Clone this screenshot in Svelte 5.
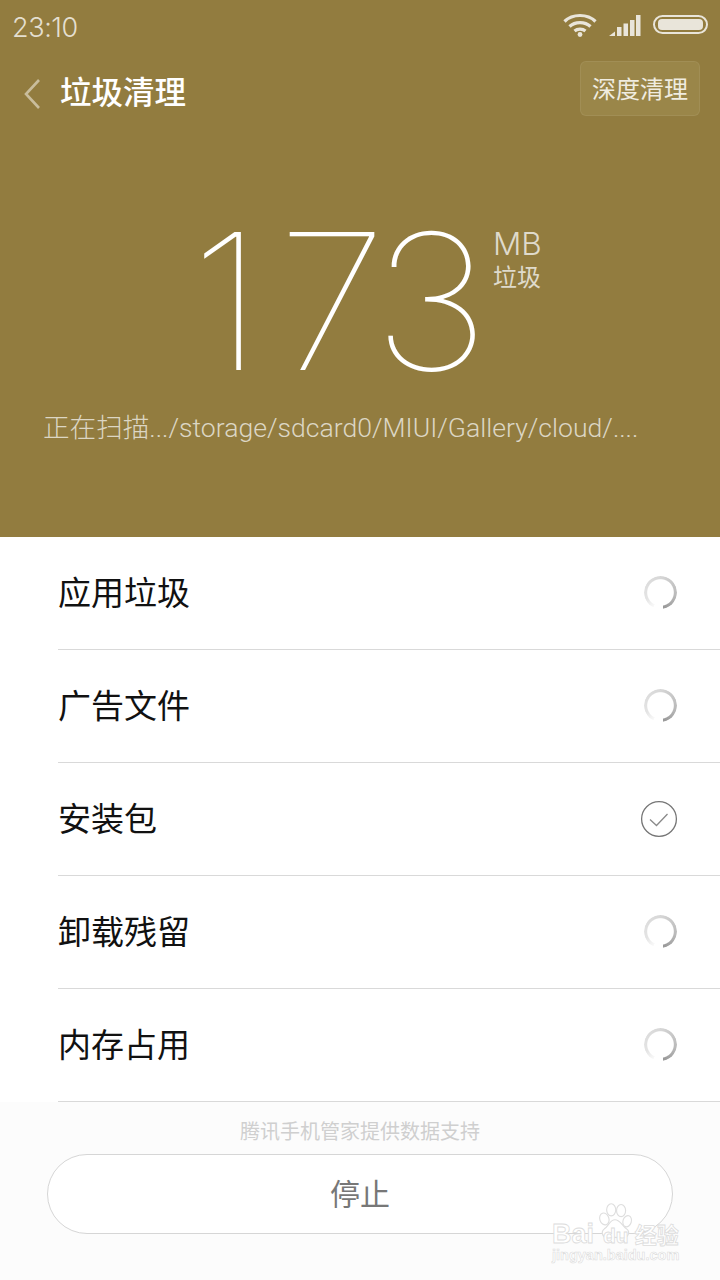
<script>
  const rows = [
    { name: '应用垃圾', done: false },
    { name: '广告文件', done: false },
    { name: '安装包', done: true },
    { name: '卸载残留', done: false },
    { name: '内存占用', done: false }
  ];
</script>

<div class="page">
  <section class="hero">
    <div class="status">
      <span class="time">23:10</span>
      <div class="status-icons">
        <svg class="wifi" width="34" height="26" viewBox="0 0 34 26" fill="none" stroke="#e9e5da" stroke-width="3.2">
          <path d="M1.500 9.500C9.500 1.500 24.500 1.500 32.500 9.500" />
          <path d="M6.500 14.500C12 9.200 22 9.200 27.500 14.500" />
          <path d="M11.500 19C14.500 16.500 19.500 16.500 22.500 19" />
          <circle cx="17" cy="22.500" r="2.400" fill="#e9e5da" stroke="none" />
        </svg>
        <svg class="signal" width="32" height="22" viewBox="0 0 32 22" fill="#e9e5da">
          <path d="M0 21 6 16.500V21Z" />
          <rect x="8" y="12" width="4.500" height="9" />
          <rect x="14.500" y="8.500" width="4.500" height="12.500" />
          <rect x="21" y="5" width="4.500" height="16" />
          <rect x="27" y="0" width="4.500" height="21" />
        </svg>
        <div class="battery"><div class="battery-fill"></div></div>
      </div>
    </div>

    <header class="nav">
      <svg class="back" width="18" height="32" viewBox="0 0 18 32" fill="none" stroke="#c9bd9c" stroke-width="2.600">
        <path d="M16 2 3 16 16 30" />
      </svg>
      <h1>垃圾清理</h1>
      <button class="deep">深度清理</button>
    </header>

    <div class="amount">
      <span class="number"><span class="d1">1</span><span class="d7">7</span>3</span>
      <div class="unit">
        <span class="mb">MB</span>
        <span class="label">垃圾</span>
      </div>
    </div>

    <p class="path">正在扫描.../storage/sdcard0/MIUI/Gallery/cloud/....</p>
  </section>

  <ul class="list">
    {#each rows as row}
      <li>
        <span class="row-name">{row.name}</span>
        {#if row.done}
          <svg class="check" width="38" height="38" viewBox="0 0 38 38" fill="none" stroke="#767676" stroke-width="1.300">
            <circle cx="19" cy="19" r="17.400" />
            <path d="M10 19.500 16.500 25.500 27.500 14" stroke="#8a8a8a" />
          </svg>
        {:else}
          <span class="spinner"></span>
        {/if}
      </li>
    {/each}
  </ul>

  <footer class="foot">
    <p class="credit">腾讯手机管家提供数据支持</p>
    <button class="stop">停止</button>
  </footer>

  <div class="mark">
    <svg class="paw" width="36" height="38" viewBox="0 0 46 50" fill="#fff" stroke="#dedede" stroke-width="1.500">
      <ellipse cx="9" cy="21" rx="6" ry="8" transform="rotate(-18 9 21)" />
      <ellipse cx="18" cy="9" rx="6" ry="8" />
      <ellipse cx="31" cy="10" rx="6" ry="8" />
      <ellipse cx="39" cy="24" rx="5.500" ry="7.500" transform="rotate(18 39 24)" />
      <path d="M23 22C16 22 15 30 9 34 3 39 8 47 15 46 20 45 27 45 32 46 40 47 44 38 38 34 32 30 30 22 23 22Z" />
    </svg>
    <div class="mark-main"><span>Bai</span><span class="du">du</span><span>经验</span></div>
    <div class="mark-url">jingyan.baidu.com</div>
  </div>
</div>

<style>
  :global(body) {
    margin: 0;
    background: #fff;
  }

  .page {
    position: relative;
    width: 720px;
    height: 1280px;
    overflow: hidden;
    display: flex;
    flex-direction: column;
    font-family: "Roboto", "Noto Sans CJK SC", sans-serif;
  }

  .hero {
    height: 537px;
    flex: none;
    background: #927c3f;
    display: flex;
    flex-direction: column;
    color: #fff;
  }

  .status {
    height: 52px;
    display: flex;
    justify-content: space-between;
    padding: 0 12px 0 12px;
    box-sizing: border-box;
  }

  .time {
    margin-top: 12px;
    font-size: 27px;
    line-height: 32px;
    color: #e4dfd0;
    font-family: "Inter", "Roboto", sans-serif;
    font-weight: 300;
    letter-spacing: -0.4px;
  }

  .status-icons {
    display: flex;
    align-items: flex-start;
  }

  .wifi {
    margin-top: 12px;
  }

  .signal {
    margin: 15px 0 0 12px;
  }

  .battery {
    margin: 15px 0 0 12px;
    width: 55px;
    height: 19px;
    border: 2px solid #e9e5da;
    border-radius: 10px;
    box-sizing: border-box;
    padding: 2px 3px;
  }

  .battery-fill {
    height: 100%;
    background: #e9e5da;
    border-radius: 4px;
  }

  .nav {
    display: flex;
    align-items: center;
    padding: 0 20px 0 23px;
    height: 64px;
    margin-top: 9px;
  }

  .back {
    flex: none;
    margin-top: 2px;
  }

  h1 {
    margin: 0 0 0 19px;
    font-size: 31.500px;
    font-weight: 500;
    color: #fff;
    line-height: 40px;
    flex: 1;
    padding-top: 2px;
  }

  .deep {
    width: 120px;
    height: 55px;
    margin-top: -10px;
    padding: 0 0 1px;
    background: #9a8649;
    border: 1px solid #a8966081;
    border-radius: 6px;
    color: #f0ece0;
    font: inherit;
    font-size: 24px;
  }

  .amount {
    display: flex;
    align-items: flex-start;
    margin: 97px 0 0 190px;
    height: 160px;
  }

  .number {
    display: inline-block;
    height: 160px;
    transform: scaleX(1.06);
    transform-origin: left top;
    font-family: "Inter", sans-serif;
    font-weight: 100;
    font-size: 189px;
    line-height: 160px;
    letter-spacing: 1.500px;
    color: #fff;
  }

  .d1 {
    letter-spacing: 13px;
  }

  .d7 {
    letter-spacing: -13.300px;
  }

  .unit {
    display: flex;
    flex-direction: column;
    margin: 4px 0 0 19px;
    color: #dfdacb;
  }

  .mb {
    font-family: "Inter", sans-serif;
    font-weight: 300;
    font-size: 31.500px;
    line-height: 36px;
  }

  .label {
    font-size: 24px;
    line-height: 32px;
    font-weight: 400;
  }

  .path {
    margin: 28px 0 0 43px;
    font-size: 26.600px;
    line-height: 36px;
    color: #dcd6c4;
    white-space: nowrap;
    font-weight: 300;
  }

  .list {
    list-style: none;
    margin: 0;
    padding: 0 0 0 58px;
    height: 565px;
    flex: none;
    background: #fff;
  }

  li {
    height: 113px;
    box-sizing: border-box;
    border-bottom: 1px solid #d9d9d9;
    display: flex;
    align-items: center;
    justify-content: space-between;
    padding-right: 43px;
    padding-bottom: 1px;
  }

  .row-name {
    font-size: 33px;
    line-height: 40px;
    color: #111;
    padding-top: 2px;
  }

  .spinner {
    width: 33px;
    height: 33px;
    border-radius: 50%;
    background: conic-gradient(from 205deg, #fafafa 0deg, #e4e4e4 40deg, #d8d8d8 150deg, #b8b8b8 260deg, #989898 325deg, #ffffff 326deg);
    -webkit-mask: radial-gradient(circle, transparent 12.800px, #000 13.800px);
    mask: radial-gradient(circle, transparent 12.800px, #000 13.800px);
  }

  .check {
    margin-right: -1px;
  }

  .foot {
    flex: 1;
    background: #fcfcfc;
    display: flex;
    flex-direction: column;
    align-items: center;
  }

  .credit {
    margin: 16px 0 0;
    font-size: 20px;
    line-height: 28px;
    color: #cfcfcf;
  }

  .stop {
    margin-top: 8px;
    width: 626px;
    height: 80px;
    padding: 0 0 4px;
    background: #fff;
    border: 1px solid #d6d6d6;
    border-radius: 40px;
    color: #777;
    font: inherit;
    font-size: 30px;
  }

  .mark {
    position: absolute;
    left: 552px;
    top: 1203px;
    width: 130px;
    height: 64px;
  }

  .paw {
    position: absolute;
    left: 45px;
    top: 0;
  }

  .mark-main {
    position: absolute;
    left: 0;
    top: 12px;
    display: flex;
    align-items: baseline;
    font-family: "Liberation Sans", sans-serif;
    font-size: 27px;
    line-height: 36px;
    font-weight: 700;
    color: #fff;
    -webkit-text-stroke: 0.800px #dcdcdc;
    white-space: nowrap;
  }

  .mark-main span:last-child {
    font-family: "Noto Sans CJK SC", sans-serif;
    font-size: 22px;
    margin-left: 6px;
  }

  .du {
    margin-left: 9px;
    font-size: 21px;
  }

  .mark-url {
    position: absolute;
    left: 0;
    top: 42px;
    font-family: "Liberation Sans", sans-serif;
    font-size: 14.500px;
    line-height: 20px;
    font-weight: 700;
    color: #fff;
    -webkit-text-stroke: 0.600px #dcdcdc;
    white-space: nowrap;
  }
</style>
